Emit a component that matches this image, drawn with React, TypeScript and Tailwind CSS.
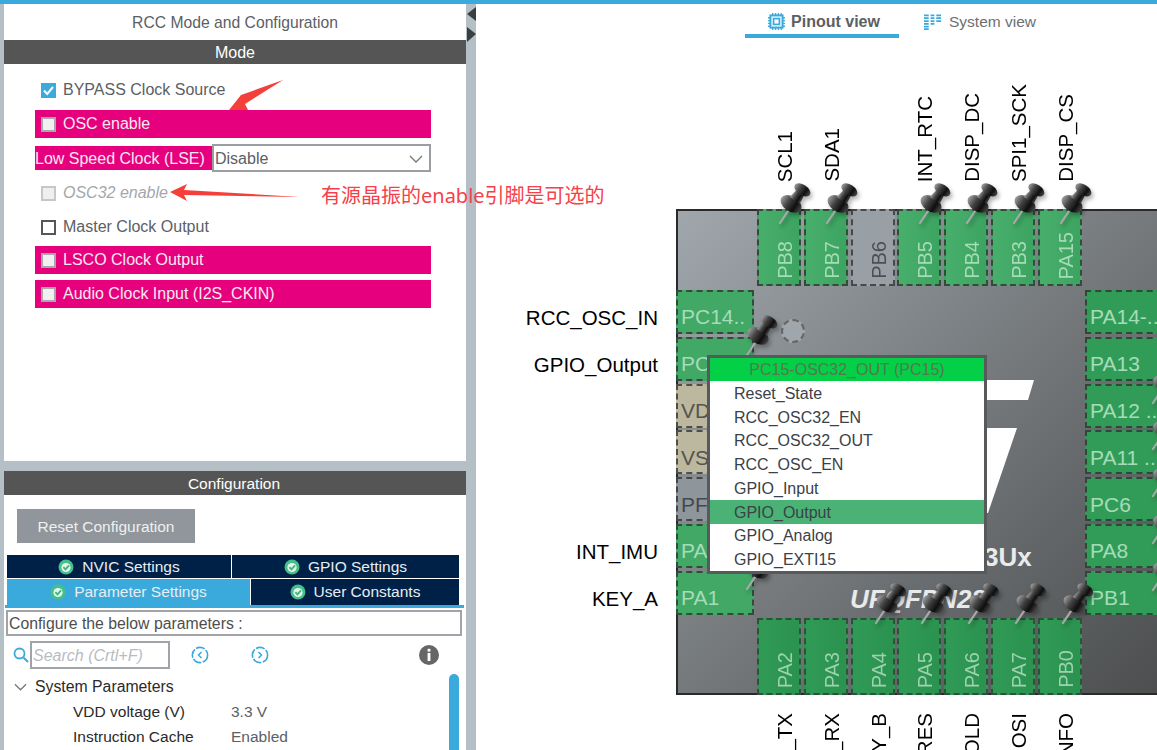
import type { ReactNode } from "react";

const topPins = [
  { name: "PB8", label: "SCL1", pinned: true },
  { name: "PB7", label: "SDA1", pinned: true },
  { name: "PB6", label: "", pinned: false },
  { name: "PB5", label: "INT_RTC", pinned: true },
  { name: "PB4", label: "DISP_DC", pinned: true },
  { name: "PB3", label: "SPI1_SCK", pinned: true },
  { name: "PA15", label: "DISP_CS", pinned: true },
];

const bottomPins = [
  { name: "PA2", label: "_TX", pinned: false },
  { name: "PA3", label: "_RX", pinned: false },
  { name: "PA4", label: "Y_B", pinned: true },
  { name: "PA5", label: "RES", pinned: true },
  { name: "PA6", label: "OLD", pinned: true },
  { name: "PA7", label: "OSI", pinned: true },
  { name: "PB0", label: "NFO", pinned: true },
];

const leftPins = [
  { name: "PC14..", kind: "green", label: "RCC_OSC_IN", pinned: false },
  { name: "PC", kind: "green", label: "GPIO_Output", pinned: true },
  { name: "VD", kind: "power", label: "", pinned: false },
  { name: "VS", kind: "power", label: "", pinned: false },
  { name: "PF", kind: "gray", label: "", pinned: false },
  { name: "PA", kind: "green", label: "INT_IMU", pinned: false },
  { name: "PA1", kind: "green", label: "KEY_A", pinned: true },
];

const rightPins = [
  { name: "PA14-..", pinned: false },
  { name: "PA13", pinned: false },
  { name: "PA12 ..", pinned: true },
  { name: "PA11 ..", pinned: true },
  { name: "PC6", pinned: true },
  { name: "PA8", pinned: true },
  { name: "PB1", pinned: true },
];

const menuItems = [
  "Reset_State",
  "RCC_OSC32_EN",
  "RCC_OSC32_OUT",
  "RCC_OSC_EN",
  "GPIO_Input",
  "GPIO_Output",
  "GPIO_Analog",
  "GPIO_EXTI15",
];

function PushPin({ className }: { className: string }) {
  return (
    <svg
      viewBox="0 0 40 46"
      className={`absolute z-[5] h-[46px] w-[40px] drop-shadow-[2px_3px_2px_rgba(0,0,0,0.3)] ${className}`}
    >
      <defs>
        <linearGradient id="pinBody" x1="0" y1="0" x2="1" y2="0">
          <stop offset="0" stopColor="#a0a0a0" />
          <stop offset="0.35" stopColor="#444" />
          <stop offset="0.7" stopColor="#0e0e0e" />
          <stop offset="1" stopColor="#4a4a4a" />
        </linearGradient>
      </defs>
      <g transform="translate(3 44) rotate(34)">
        <path d="M0 0 L0 -16" stroke="#a8a8a8" strokeWidth="2.2" strokeLinecap="round" />
        <ellipse cx="-1.5" cy="-22" rx="11.5" ry="7.5" fill="url(#pinBody)" />
        <path d="M-6.5 -27 L-4.5 -38 L4.5 -38 L5.5 -27 Z" fill="url(#pinBody)" />
        <ellipse cx="0" cy="-40" rx="9" ry="5.2" fill="url(#pinBody)" />
      </g>
    </svg>
  );
}

function CheckMark() {
  return (
    <svg viewBox="0 0 16 16" className="h-[16px] w-[16px] shrink-0">
      <circle cx="8" cy="8" r="7.5" fill="#45c08a" />
      <circle cx="8" cy="8.5" r="4.6" fill="#e4f5ec" />
      <path d="M5.4 8.2 L7.5 10.4 L11 6.4" fill="none" stroke="#3db57f" strokeWidth="1.8" />
    </svg>
  );
}

function Box({ tone }: { tone: "checked" | "pink" | "disabled" | "plain" }) {
  if (tone === "checked") {
    return (
      <span className="flex h-[15px] w-[15px] shrink-0 items-center justify-center bg-[#3aa9dc]">
        <svg viewBox="0 0 15 15" className="h-[15px] w-[15px]">
          <path d="M3 7.5 L6.2 11 L12 4" fill="none" stroke="#fff" strokeWidth="2" />
        </svg>
      </span>
    );
  }
  const look =
    tone === "pink"
      ? "border-[#a9a9a9] bg-[#f0f0f0]"
      : tone === "disabled"
        ? "border-[#c4c8cb] bg-[#efefef]"
        : "border-[#55585b] bg-white";
  return <span className={`h-[15px] w-[15px] shrink-0 border-2 ${look}`} />;
}

function ModeRow({
  children,
  tone,
  className,
}: {
  children: ReactNode;
  tone: "pink" | "disabled" | "plain" | "checked";
  className: string;
}) {
  const pink = tone === "pink";
  return (
    <div
      className={`flex items-center gap-[7px] pl-[6px] text-[16px] ${
        pink ? "h-[28px] bg-[#e6007e] text-[#f6e9f0]" : "h-[26px] text-[#5b6065]"
      } ${tone === "disabled" ? "italic text-[#a3a7aa]" : ""} ${className}`}
    >
      <Box tone={tone} />
      <span>{children}</span>
    </div>
  );
}

function RoundArrow({ flip, className }: { flip?: boolean; className: string }) {
  return (
    <svg viewBox="0 0 18 18" className={className}>
      <circle cx="9" cy="9" r="7.6" fill="none" stroke="#3aa9dc" strokeWidth="1.6" strokeDasharray="9 1.5" />
      <path
        d={flip ? "M7.5 6 L10.5 9 L7.5 12" : "M10.5 6 L7.5 9 L10.5 12"}
        fill="none"
        stroke="#3aa9dc"
        strokeWidth="1.5"
      />
    </svg>
  );
}

function LeftPanel() {
  return (
    <div className="flex h-full w-[476px] shrink-0 flex-col bg-[#b4bfc6] pl-[4px] pr-[10px]">
      <section className="h-[457px] bg-white">
        <h2 className="flex h-[36px] items-center justify-center pt-px text-[15.7px] font-normal text-[#5b6065]">
          RCC Mode and Configuration
        </h2>
        <div className="flex h-[24px] items-center justify-center bg-[#545554] pt-px text-[16px] text-white">Mode</div>
        <div className="ml-[31px] w-[396px]">
          <ModeRow tone="checked" className="mt-[13px]">BYPASS Clock Source</ModeRow>
          <ModeRow tone="pink" className="mt-[7px]">OSC enable</ModeRow>
          <div className="mt-[6px] flex h-[28px] items-center">
            <div className="flex h-[24px] w-[177px] items-center bg-[#e6007e] pt-px text-[16px] text-[#f6e9f0]">
              Low Speed Clock (LSE)
            </div>
            <div className="flex h-[28px] flex-1 items-center justify-between border-2 border-[#9a9ea2] pl-[1px] pr-[6px] pt-px text-[16px] text-[#5b6065]">
              Disable
              <svg viewBox="0 0 14 8" className="h-[8px] w-[14px]">
                <path d="M1 1 L7 7 L13 1" fill="none" stroke="#777" strokeWidth="1.3" />
              </svg>
            </div>
          </div>
          <ModeRow tone="disabled" className="mt-[8px]">OSC32 enable</ModeRow>
          <ModeRow tone="plain" className="mt-[8px]">Master Clock Output</ModeRow>
          <ModeRow tone="pink" className="mt-[6px]">LSCO Clock Output</ModeRow>
          <ModeRow tone="pink" className="mt-[6px]">Audio Clock Input (I2S_CKIN)</ModeRow>
        </div>
      </section>

      <section className="relative mt-[10px] flex-1 overflow-hidden bg-white">
        <div className="flex h-[24px] items-center justify-center bg-[#545554] pr-[2px] pt-px text-[15.5px] text-white">
          Configuration
        </div>
        <button className="ml-[13px] mt-[14px] block h-[34px] w-[178px] bg-[#90969b] pt-px text-[15.5px] text-[#eef0f1]">
          Reset Configuration
        </button>
        <div className="ml-[3px] mt-[11px] w-[452px] text-[15.5px] text-[#e8edf2]">
          <div className="flex h-[24px] gap-px pt-px">
            <div className="flex w-[224px] items-center justify-center gap-[8px] bg-[#002147]">
              <CheckMark />
              NVIC Settings
            </div>
            <div className="flex flex-1 items-center justify-center gap-[8px] bg-[#002147]">
              <CheckMark />
              GPIO Settings
            </div>
          </div>
          <div className="mt-px flex h-[26px] gap-px">
            <div className="flex w-[243px] items-center justify-center gap-[8px] bg-[#3aa9dc]">
              <CheckMark />
              Parameter Settings
            </div>
            <div className="flex flex-1 items-center justify-center gap-[8px] bg-[#002147]">
              <CheckMark />
              User Constants
            </div>
          </div>
        </div>
        <div className="ml-[1px] h-[3px] w-[459px] bg-[#3aa9dc]" />
        <div className="ml-[2px] mt-[2px] flex h-[26px] w-[456px] items-center border-2 border-[#a0a4a8] pl-[1px] pt-px text-[15.8px] text-[#4e4e4e]">
          Configure the below parameters :
        </div>
        <div className="mt-[5px] flex h-[28px] items-center pl-[9px]">
          <svg viewBox="0 0 16 16" className="h-[16px] w-[16px]">
            <circle cx="6.5" cy="6.5" r="5" fill="none" stroke="#3aa9dc" strokeWidth="1.8" />
            <path d="M10.5 10.5 L15 15" stroke="#3aa9dc" strokeWidth="2" />
          </svg>
          <div className="ml-[1px] flex h-[28px] w-[140px] items-center border-2 border-[#a0a4a8] pl-[1px] pt-[2px] text-[16px] italic text-[#b8bcbf]">
            Search (Crtl+F)
          </div>
          <RoundArrow className="ml-[21px] h-[18px] w-[18px]" />
          <RoundArrow flip className="ml-[42px] h-[18px] w-[18px]" />
          <svg viewBox="0 0 20 20" className="ml-[150px] h-[20px] w-[20px]">
            <circle cx="10" cy="10" r="10" fill="#666" />
            <rect x="8.6" y="8" width="2.8" height="8" fill="#fff" />
            <rect x="8.6" y="3.8" width="2.8" height="2.8" fill="#fff" />
          </svg>
        </div>
        <div className="mt-[4px] flex h-[26px] items-center pl-[10px] pt-px text-[15.8px] text-[#2a2a2a]">
          <svg viewBox="0 0 14 8" className="h-[8px] w-[13px]">
            <path d="M1 1 L7 7 L13 1" fill="none" stroke="#777" strokeWidth="1.4" />
          </svg>
          <span className="ml-[8px]">System Parameters</span>
        </div>
        <div className="flex h-[25px] items-center pl-[69px] text-[15.5px] text-[#2a2a2a]">
          <span className="w-[158px]">VDD voltage (V)</span>
          <span className="text-[#5b6065]">3.3 V</span>
        </div>
        <div className="flex h-[25px] items-center pl-[69px] text-[15.5px] text-[#2a2a2a]">
          <span className="w-[158px]">Instruction Cache</span>
          <span className="text-[#5b6065]">Enabled</span>
        </div>
        <div className="absolute left-[445px] top-[203px] h-[90px] w-[10px] rounded-t-[5px] bg-[#3aa9dc]" />
      </section>

      {/* annotations drawn over the panel */}
      <svg viewBox="0 0 320 130" className="absolute left-[0px] top-[76px] z-10 h-[130px] w-[320px]">
        <polygon points="283,4 241,19 229,34 248,34 245,28" fill="#f4403a" />
        <polygon points="170,116 187,108 184,114 300,121 184,119 187,125" fill="#f4403a" />
      </svg>
      <div className="absolute left-[321px] top-[181px] z-10 font-['Noto_Sans','Noto_Sans_CJK_SC',sans-serif] text-[20px] text-[#f5414a]">
        有源晶振的enable引脚是可选的
      </div>

      {/* collapse handles on the splitter */}
      <svg viewBox="0 0 10 36" className="absolute left-[467px] top-[7px] h-[36px] w-[10px]">
        <polygon points="9,0 0,7 9,14" fill="#3a3f42" />
        <polygon points="0,20 9,27 0,35" fill="#3a3f42" />
      </svg>
    </div>
  );
}

function PinoutView() {
  return (
    <div className="relative flex-1 bg-white">
      <div className="flex h-[34px] pl-[269px]">
        <div className="flex h-[34px] w-[154px] items-center justify-center gap-[6px] border-b-4 border-[#3aa9dc] pl-[4px] pt-[5px] text-[16px] font-bold text-[#5b6065]">
          <svg viewBox="0 0 18 18" className="h-[17px] w-[17px]">
            <rect x="2.5" y="2.5" width="13" height="13" fill="#d6eef9" stroke="#3aa9dc" strokeWidth="2" />
            <rect x="6" y="6" width="6" height="6" fill="#fff" stroke="#3aa9dc" strokeWidth="1.6" />
            <path
              d="M5 0V2M8 0V2M11 0V2M14 0V2M5 16V18M8 16V18M11 16V18M14 16V18M0 5H2M0 8H2M0 11H2M0 14H2M16 5H18M16 8H18M16 11H18M16 14H18"
              stroke="#3aa9dc"
              strokeWidth="1.4"
            />
          </svg>
          Pinout view
        </div>
        <div className="ml-[25px] flex h-[36px] items-center gap-[8px] text-[15.5px] text-[#6b7075]">
          <svg viewBox="0 0 18 16" className="h-[16px] w-[17px]">
            <path
              d="M0 1H5M7 1H11M13 1H18M0 4H5M7 4H11M13 4H18M0 7H5M7 7H11M13 7H18M0 10H5M7 10H11M0 13H5M0 15.5H5"
              stroke="#3aa9dc"
              strokeWidth="1.8"
            />
          </svg>
          System view
        </div>
      </div>

      {/* chip canvas: pins sit around the package like on a diagram */}
      <div className="absolute left-[200px] top-[205px] h-[486px] w-[486px] border-2 border-[#2a2a2a] bg-linear-to-br from-[#a0a7ac] via-[#75797c] to-[#4c4e4f]">
        <div className="absolute left-[79px] top-[-2px] flex gap-[2.83px]">
          {topPins.map((pin) => (
            <div
              key={pin.name}
              className={`relative flex h-[77px] w-[44px] items-end justify-end border-2 border-dashed border-[#333]/80 pb-[5px] pr-[4px] ${
                pin.name === "PB6"
                  ? "bg-[#98a0a6] text-[#4a4f54]"
                  : "bg-linear-to-r from-[#48ae6c] to-[#3ca460] text-[#a6dcb8]"
              }`}
            >
              <span className="rotate-180 text-[20px] leading-[20px] [writing-mode:vertical-rl]">{pin.name}</span>
              {pin.label && (
                <span className="absolute bottom-[calc(100%+29px)] left-[16px] rotate-180 whitespace-nowrap text-[20.5px] leading-[20px] text-black [writing-mode:vertical-rl]">
                  {pin.label}
                </span>
              )}
              {pin.pinned && <PushPin className="left-[18px] top-[-32px]" />}
            </div>
          ))}
        </div>

        <div className="absolute bottom-[-2px] left-[79px] flex gap-[2.83px]">
          {bottomPins.map((pin) => (
            <div
              key={pin.name}
              className="relative flex h-[77px] w-[44px] items-end justify-end border-2 border-dashed border-[#333]/70 bg-linear-to-r from-[#2f9a56] to-[#2b924f] pb-[5px] pr-[4px] text-[#9dd2ae]"
            >
              <span className="rotate-180 text-[20px] leading-[20px] [writing-mode:vertical-rl]">{pin.name}</span>
              <span className="absolute left-[16px] top-[calc(100%+20px)] rotate-180 whitespace-nowrap text-[20.5px] leading-[20px] text-black [writing-mode:vertical-rl]">
                {pin.label}
              </span>
              {pin.pinned && <PushPin className="left-[20px] top-[-41px]" />}
            </div>
          ))}
        </div>

        <div className="absolute left-[-2px] top-[79px] flex flex-col gap-[2.83px]">
          {leftPins.map((pin) => (
            <div
              key={pin.name}
              className={`relative flex h-[44px] w-[78px] items-center border-2 border-dashed border-[#333]/80 pl-[3px] pt-[10px] text-[21px] ${
                pin.kind === "green"
                  ? "bg-[#41a866] text-[#a6dcb8]"
                  : pin.kind === "power"
                    ? "bg-[#bcb8a0] text-[#54544c]"
                    : "bg-[#8e969c] text-[#45494d]"
              }`}
            >
              {pin.name}
              {pin.label && (
                <span className="absolute right-[calc(100%+20px)] top-[13px] whitespace-nowrap text-[20.5px] leading-[26px] text-black">
                  {pin.label}
                </span>
              )}
              {pin.pinned && <PushPin className="left-[66px] top-[-28px]" />}
            </div>
          ))}
        </div>

        <div className="absolute left-[407px] top-[79px] flex flex-col gap-[2.83px]">
          {rightPins.map((pin) => (
            <div
              key={pin.name}
              className="relative flex h-[44px] w-[78px] items-center border-2 border-dashed border-[#333]/80 bg-[#319c58] pl-[3px] pt-[10px] text-[21px] text-[#a6dcb8]"
            >
              {pin.name}
              {pin.pinned && <PushPin className="left-[63px] top-[-27px]" />}
            </div>
          ))}
        </div>

        <div className="absolute left-[103px] top-[108px] h-[24px] w-[24px] rounded-full border-2 border-dashed border-[#666] bg-[#a0a7ac]" />

        <svg viewBox="0 0 486 486" className="absolute left-[-2px] top-[-2px] h-[486px] w-[486px]">
          <polygon points="280,171 358,171 352,191 280,191" fill="#fff" />
          <polygon points="280,219 341,219 312,304 280,304" fill="#fff" />
        </svg>
        <span className="absolute left-[306px] top-[327px] text-[26px] font-bold text-[#e8eaeb]">3Ux</span>
        <span className="absolute left-[172px] top-[369px] text-[26px] font-bold italic text-[#e8eaeb]">UFQFPN28</span>

        {/* pin function menu */}
        <div className="absolute left-[29px] top-[144px] z-10 w-[280px] border-[3px] border-[#58595a] bg-white text-[16px]">
          <div className="flex h-[23px] items-center justify-center bg-[#03cf47] pt-px text-[#55784f]">
            PC15-OSC32_OUT (PC15)
          </div>
          {menuItems.map((item) => (
            <div
              key={item}
              className={`flex h-[23.75px] items-center pl-[24px] pt-[2px] text-[#3a4148] ${
                item === "GPIO_Output" ? "bg-[#4ab274]" : ""
              }`}
            >
              {item}
            </div>
          ))}
        </div>
      </div>
    </div>
  );
}

export default function App() {
  return (
    <div className="relative h-[750px] w-[1157px] overflow-hidden bg-white font-['Liberation_Sans',Arial,sans-serif]">
      <div className="h-[4px] bg-[#3aa9dc]" />
      <div className="flex h-[746px]">
        <LeftPanel />
        <PinoutView />
      </div>
    </div>
  );
}
